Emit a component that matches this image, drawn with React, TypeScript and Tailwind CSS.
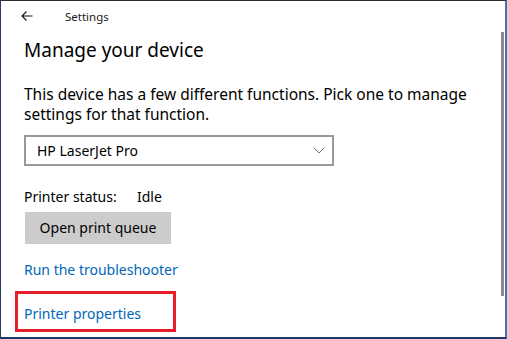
export default function App() {
  return (
    <div
      className="relative w-[507px] h-[339px] overflow-hidden bg-white border-l border-t border-r-2 border-b-2 border-l-[#2b3c5e] border-t-[#2d2d2d] border-r-[#4670b0] border-b-[#1f3868] text-black"
      style={{ fontFamily: '"Noto Sans", sans-serif' }}
    >
      {/* Title bar */}
      <div className="flex items-center pt-[6px] pl-[20px] h-[22px]">
        <svg className="mt-[2px]" width="12" height="10" viewBox="0 0 12 10" fill="none" stroke="#111" strokeWidth="1.1">
          <path d="M11.5 5H1M5.5 0.5L1 5l4.5 4.5" />
        </svg>
        <span className="ml-[32px] mt-[3px] text-[11.5px] leading-[16px] text-[#1a1a1a]">Settings</span>
      </div>

      <div className="pl-[23px]">
        <h1 className="mt-[15px] text-[19px] leading-[24px] font-normal">Manage your device</h1>

        <p className="mt-[22px] w-[470px] text-[15.5px] leading-[20px]">
          This device has a few different functions. Pick one to manage settings for that function.
        </p>

        <div className="mt-[11px] w-[310px] h-[31px] border-2 border-[#999999] flex items-center justify-between pl-[11px] pr-[7px]">
          <span className="text-[14px] leading-[20px]">HP LaserJet Pro</span>
          <svg width="12" height="7" viewBox="0 0 12 7" fill="none" stroke="#777" strokeWidth="1">
            <path d="M0.5 0.5L6 6l5.5-5.5" />
          </svg>
        </div>

        <div className="mt-[21px] flex text-[14px] leading-[20px]">
          <span className="w-[113px]">Printer status:</span>
          <span>Idle</span>
        </div>

        <button className="mt-[5px] ml-px w-[146px] h-[32px] bg-[#cccccc] text-[14px] leading-[20px] text-black">
          Open print queue
        </button>

        <div className="mt-[16px] text-[14px] leading-[20px] text-[#0067b8]">Run the troubleshooter</div>

        <div className="mt-[11px] -ml-[9px] w-[161px] border-[3px] border-[#e61e2a] pl-[6px] pt-[7px] pb-[4px]">
          <span className="text-[14px] leading-[20px] text-[#0067b8]">Printer properties</span>
        </div>
      </div>

      {/* Scrollbar thumb */}
      <div className="absolute left-[500px] top-[31px] w-[3px] h-[264px] bg-[#8a8a8a]" />
    </div>
  )
}
